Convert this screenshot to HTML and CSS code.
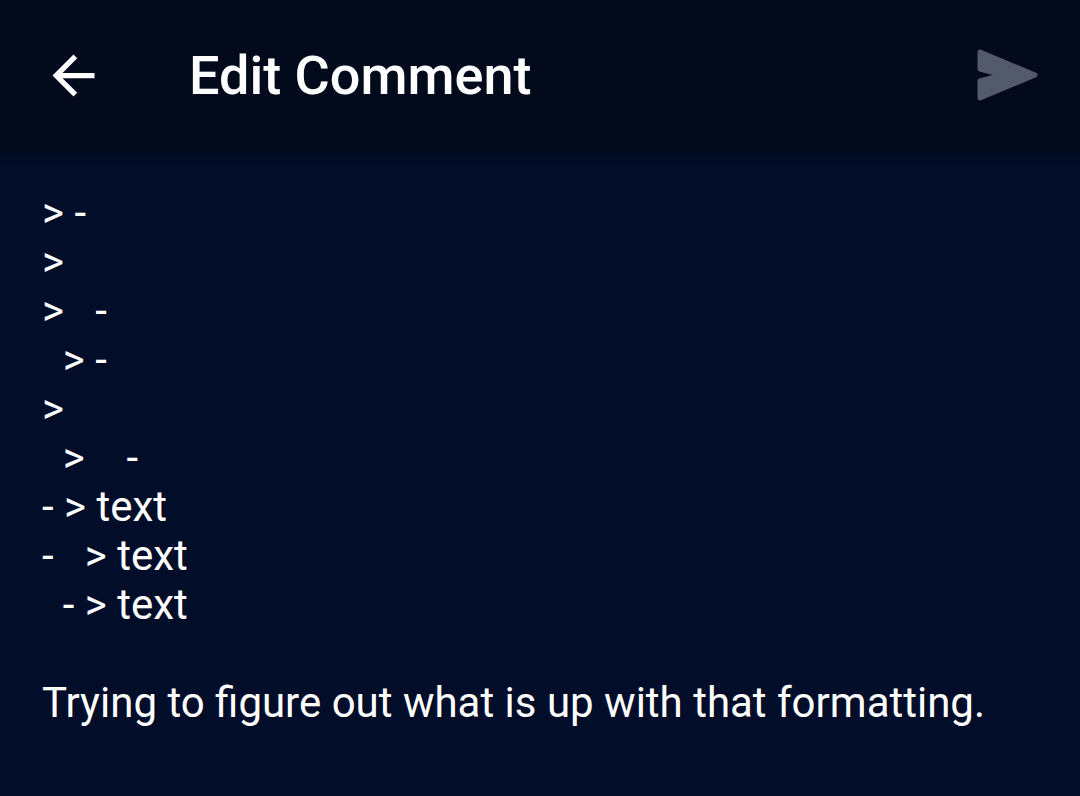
FILE: index.html
```html
<!DOCTYPE html>
<html>
<head>
<meta charset="utf-8">
<link rel="stylesheet" href="styles.css">
</head>
<body>
<div class="app">
  <header class="topbar">
    <button class="icon-btn back" aria-label="Back">
      <svg viewBox="0 0 24 24" width="63" height="63"><path fill="#ffffff" d="M20 11H7.83l5.59-5.59L12 4l-8 8 8 8 1.41-1.41L7.83 13H20v-2z"/></svg>
    </button>
    <h1 class="title">Edit Comment</h1>
    <button class="icon-btn send" aria-label="Send">
      <svg viewBox="0 0 70 60" width="70" height="60"><path d="M8 6 L63 29 L8 52 L8 35 L30 29 L8 23 Z" fill="#525a6b" stroke="#525a6b" stroke-width="5" stroke-linejoin="round"/></svg>
    </button>
  </header>
  <main class="content">
<p class="pre">&gt; -
&gt;
&gt;   -
  &gt; -
&gt;
  &gt;    -
- &gt; text
-   &gt; text
  - &gt; text</p>
<p class="para">Trying to figure out what is up with that formatting.</p>
  </main>
</div>
</body>
</html>
```
FILE: styles.css
```css
html, body {
  margin: 0;
  padding: 0;
  background: #020d29;
}
.app {
  width: 1080px;
  height: 796px;
  display: flex;
  flex-direction: column;
  font-family: Roboto, "Noto Sans", sans-serif;
  color: #ffffff;
}
.topbar {
  height: 153px;
  background: #030a1b;
  display: flex;
  align-items: center;
  box-shadow: 0 2px 8px rgba(0,0,0,0.35);
  position: relative;
  z-index: 1;
  padding-bottom: 2px;
  box-sizing: border-box;
}
.icon-btn {
  background: none;
  border: 0;
  padding: 0;
  display: flex;
  align-items: center;
  justify-content: center;
}
.back {
  margin-left: 42px;
  width: 63px;
  height: 63px;
}
.title {
  margin: 0 0 0 84px;
  font-size: 54px;
  font-weight: 500;
  letter-spacing: 0;
  flex: 1;
  line-height: 1;
}
.send {
  margin-right: 38px;
  width: 70px;
  height: 60px;
}
.content {
  flex: 1;
  padding: 35px 42px 0 42px;
  font-size: 42px;
  line-height: 49px;
}
.content p {
  margin: 0;
}
.pre {
  white-space: pre;
}
.para {
  margin-top: 49px !important;
}
```
